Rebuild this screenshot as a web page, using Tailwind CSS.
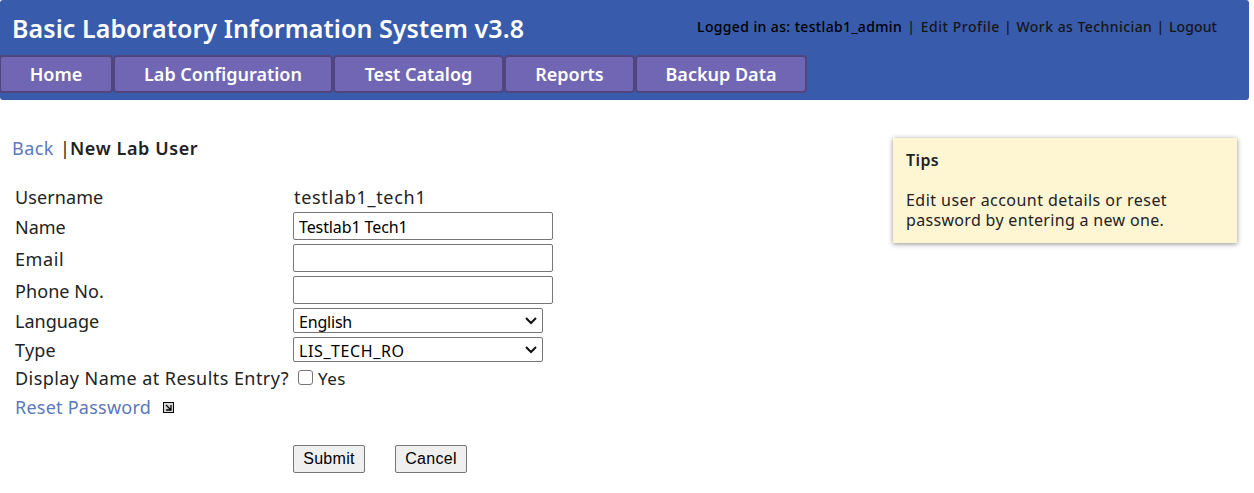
<!DOCTYPE html>
<html lang="en">
<head>
<meta charset="utf-8">
<title>Basic Laboratory Information System</title>
<script src="https://cdn.jsdelivr.net/npm/@tailwindcss/browser@4"></script>
</head>
<body class="bg-white text-[#222222] font-['Noto_Sans',sans-serif]">
<header class="w-[1249px] h-[100px] bg-[#385bab] rounded-[3px] overflow-hidden whitespace-nowrap">
  <div class="flex h-[55px] justify-between pl-3 pr-8">
    <h1 class="text-white font-semibold text-[25px] leading-[56px] tracking-[0.07px]">Basic Laboratory Information System v3.8</h1>
    <div class="text-[#161616] font-medium text-[14px] leading-[53px] tracking-[0.42px] [word-spacing:0.2px]"><span class="text-black tracking-[0.34px]">Logged in as: testlab1_admin</span><span class="px-[1px]"> | </span><a class="tracking-[0.53px]">Edit Profile</a> | <a>Work as Technician</a> | <a class="tracking-[0.1px]">Logout</a></div>
  </div>
  <nav class="flex -ml-px text-white font-semibold text-[18px] leading-[34px] text-center">
    <a class="w-[114px] h-[38px] border-2 border-[#51457f] rounded-[4px] bg-[#7066b3]">Home</a>
    <a class="w-[220px] h-[38px] border-2 border-[#51457f] rounded-[4px] bg-[#7066b3]">Lab Configuration</a>
    <a class="w-[171px] h-[38px] border-2 border-[#51457f] rounded-[4px] bg-[#7066b3]">Test Catalog</a>
    <a class="w-[131px] h-[38px] border-2 border-[#51457f] rounded-[4px] bg-[#7066b3]">Reports</a>
    <a class="w-[172px] h-[38px] border-2 border-[#51457f] rounded-[4px] bg-[#7066b3]">Backup Data</a>
  </nav>
</header>
<main class="flex w-[1249px] justify-between pl-3 pr-3 pt-[37px]">
  <section class="whitespace-nowrap">
    <div class="h-[22px] leading-[22px] text-[18px] flex"><a class="text-[#5a78ba] w-[42px] tracking-[0.45px]">Back</a><span class="ml-[6px] w-[10px]">|</span><b class="font-semibold tracking-[0.6px]">New Lab User</b></div>
    <div class="mt-[23px] pl-[3px] grid grid-cols-[278px_auto] grid-rows-[28px_32px_32px_32px_29px_29px_28px_29px] items-center text-[18px] leading-[26px]">
      <span class="pt-[2px] tracking-[0.1px]">Username</span><span class="pt-[2px] pl-px tracking-[0.7px]">testlab1_tech1</span>
      <label class="pt-[2px]">Name</label><input value="Testlab1 Tech1" class="w-[260px] h-7 border border-[#767676] rounded-[2px] px-[5px] pt-[2px] text-[16px] text-black tracking-[-0.1px]">
      <label class="pt-px tracking-[0.6px]">Email</label><input class="w-[260px] h-7 border border-[#767676] rounded-[2px]">
      <label class="pt-px tracking-[0.08px]">Phone No.</label><input class="w-[260px] h-7 border border-[#767676] rounded-[2px]">
      <label>Language</label>
      <div class="w-[250px] h-[25px] border border-[#767676] rounded-[2px] pl-[5px] pr-[4px] pt-[2px] flex items-center justify-between text-[16px] text-black"><span class="pt-px tracking-[-0.2px]">English</span><svg class="-mt-[3px]" width="14" height="9" fill="none" stroke="#111" stroke-width="2"><path d="M2 2l5 5 5-5"/></svg></div>
      <label class="tracking-[0.23px]">Type</label>
      <div class="w-[250px] h-[25px] border border-[#767676] rounded-[2px] pl-[5px] pr-[4px] pt-[2px] flex items-center justify-between text-[16px] text-black"><span class="pt-px tracking-[0.6px]">LIS_TECH_RO</span><svg class="-mt-[3px]" width="14" height="9" fill="none" stroke="#111" stroke-width="2"><path d="M2 2l5 5 5-5"/></svg></div>
      <label class="tracking-[0.44px]">Display Name at Results Entry?</label>
      <div class="flex items-center pl-[5px] text-[16px]"><i class="size-[15px] border border-[#767676] rounded-[3px] mr-[5px] -mt-[2px]"></i><span class="pt-px text-[17px] tracking-[0.5px]">Yes</span></div>
      <div class="flex items-center"><a class="text-[#5a78ba] tracking-[0.24px]">Reset Password</a>
        <svg class="ml-3 mt-[2px]" width="11" height="11" fill="none"><rect x="0.5" y="0.5" width="10" height="10" fill="#d8d8d8" stroke="#000"/><path d="M3 3l4.5 4.5M8 3v5H3" stroke="#000" stroke-width="1.3"/></svg></div>
    </div>
    <div class="mt-6 pl-[281px] flex gap-[30px] text-[16px] font-['Liberation_Sans',Arial,sans-serif] text-black leading-[26px] text-center tracking-[0.3px]">
      <button class="w-[72px] h-7 border border-[#767676] rounded-[2px] bg-[#efefef]">Submit</button>
      <button class="w-[72px] h-7 border border-[#767676] rounded-[2px] bg-[#efefef]">Cancel</button>
    </div>
  </section>
  <aside class="mt-px w-[344px] h-[105px] bg-[#fef5d3] shadow-[0_1px_5px_rgba(0,0,0,0.45)] px-[13px] pt-3 text-[16px] leading-[20px] whitespace-nowrap">
    <b class="font-semibold tracking-[0.4px]">Tips</b>
    <p class="mt-5"><span class="tracking-[0.45px]">Edit user account details or reset</span><br><span class="tracking-[0.32px]">password by entering a new one.</span></p>
  </aside>
</main>
</body>
</html>
